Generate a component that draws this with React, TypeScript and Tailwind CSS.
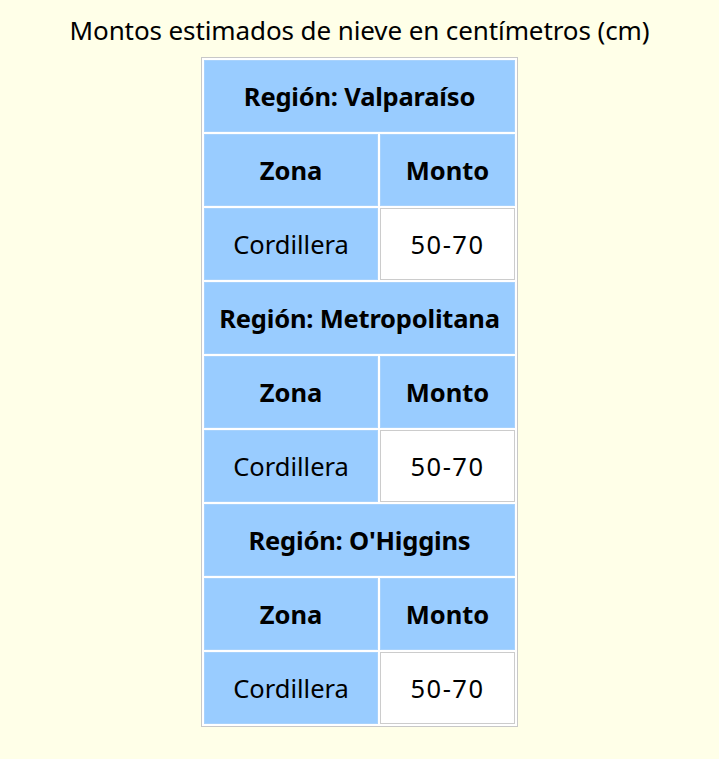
const regions = ["Valparaíso", "Metropolitana", "O'Higgins"];

export default function App() {
  return (
    <div
      className="min-h-[759px] bg-[#ffffe8] pt-[12px] text-black"
      style={{ fontFamily: '"Noto Sans", "Open Sans", sans-serif' }}
    >
      <h1 className="text-center text-[26px] leading-[36px] tracking-[-0.1px]">
        Montos estimados de nieve en centímetros (cm)
      </h1>
      <table className="mx-auto mt-[9px] w-[317px] border-separate border-spacing-[2px] border border-[#c8c8c8] bg-white">
        <tbody>
          {regions.map((r) => (
            <RegionRows key={r} region={r} />
          ))}
        </tbody>
      </table>
    </div>
  );
}

function RegionRows({ region }: { region: string }) {
  return (
    <>
      <tr>
        <th
          colSpan={2}
          className="h-[72px] border border-[#a8d2fc] bg-[#99ccff] px-1 text-center text-[25.5px] font-bold tracking-[-0.2px]"
        >
          Región: {region}
        </th>
      </tr>
      <tr>
        <th className="h-[72px] w-[174px] border border-[#a8d2fc] bg-[#99ccff] text-center text-[25.5px] font-bold">
          Zona
        </th>
        <th className="h-[72px] border border-[#a8d2fc] bg-[#99ccff] text-center text-[25.5px] font-bold">
          Monto
        </th>
      </tr>
      <tr>
        <td className="h-[72px] border border-[#a8d2fc] bg-[#99ccff] text-center text-[25.5px]">
          Cordillera
        </td>
        <td className="h-[72px] border border-[#cccccc] bg-white text-center text-[25.5px] tracking-[1.5px]">
          50-70
        </td>
      </tr>
    </>
  );
}
